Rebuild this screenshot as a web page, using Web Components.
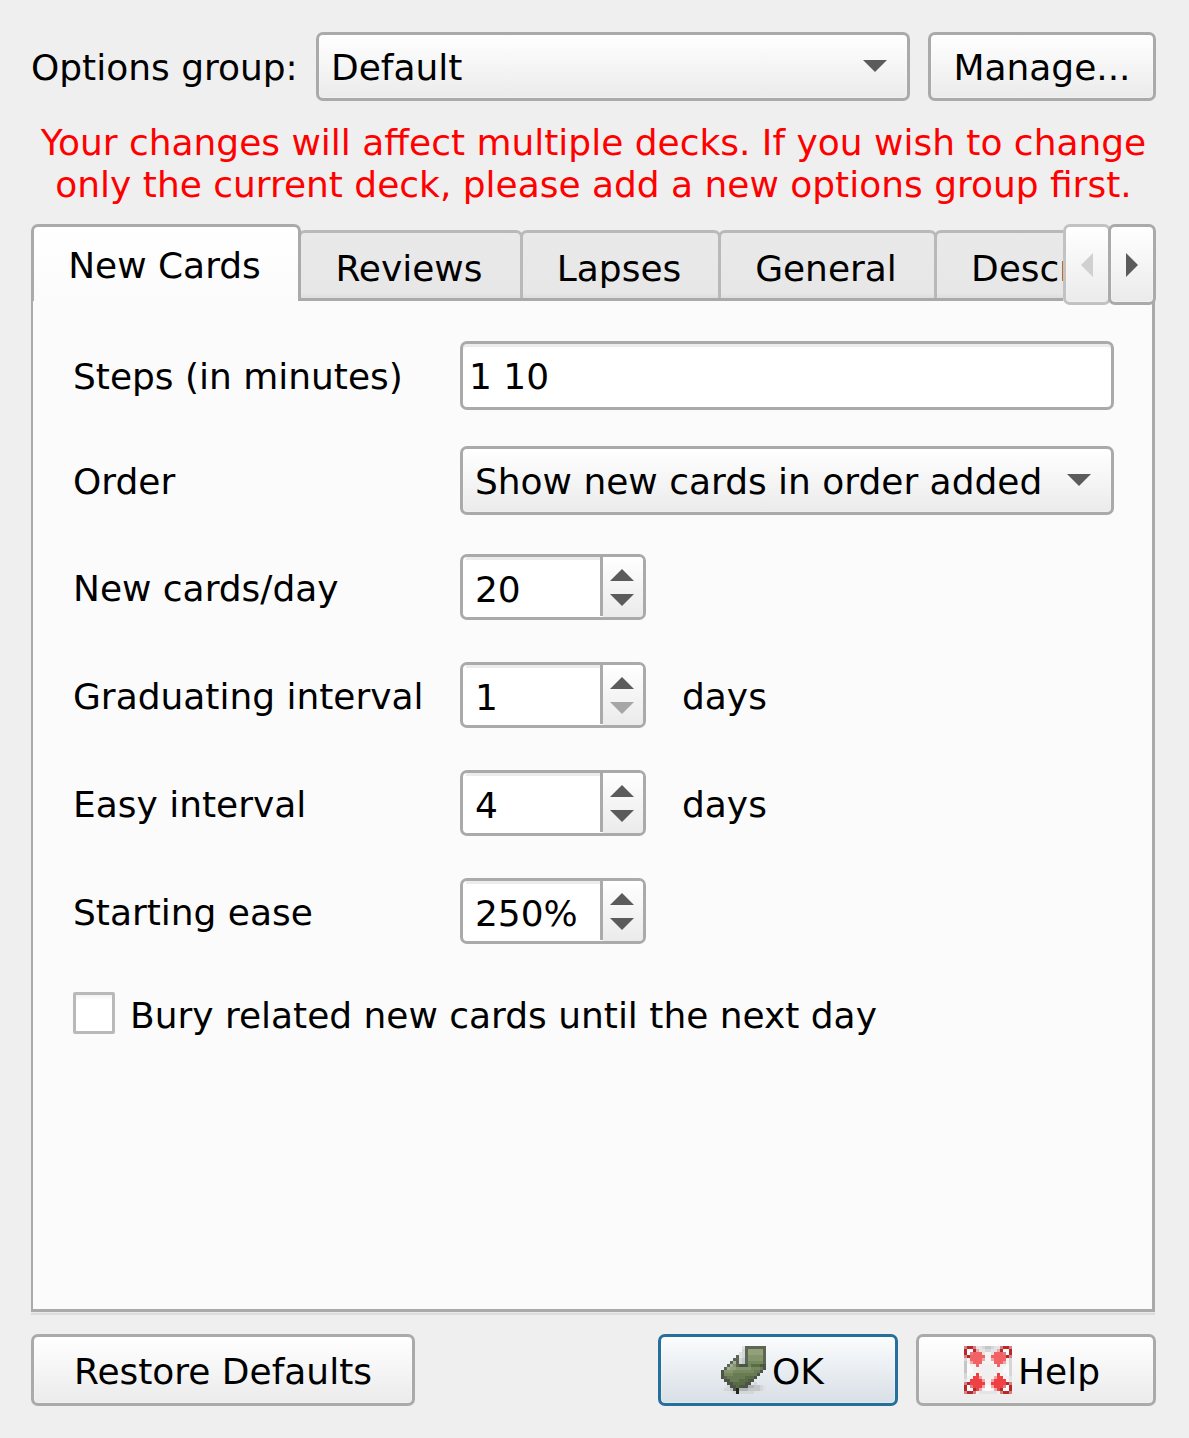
<!DOCTYPE html>
<html lang="en">
<head>
<meta charset="utf-8">
<title>Options</title>
<style>
html,body{margin:0;height:100%;background:#efefef}
body{font:35.96px/42px "DejaVu Sans",sans-serif;color:#000;overflow:hidden}
</style>
</head>
<body>
<options-dialog></options-dialog>
<script>
const define = (name, html, setup) => {
  const t = document.createElement('template');
  t.innerHTML = '<style>*{box-sizing:border-box}:host{box-sizing:border-box;white-space:nowrap}</style>' + html;
  customElements.define(name, class extends HTMLElement {
    constructor() {
      super();
      this.attachShadow({mode: 'open'}).append(t.content.cloneNode(true));
    }
    connectedCallback() { if (setup) setup(this, this.shadowRoot); }
  });
};

const frame = 'border:3px solid #aaa;border-radius:7px;';
const raised = frame + 'background:linear-gradient(#fff,#ebebeb);box-shadow:inset 0 0 0 1px rgba(255,255,255,.25);';

// Palette-indexed 16x16 icon, three device pixels per cell
const icons = {
  enter: {
    colors: {k:'#4b5446', d:'#5c6653', K:'#20271b', a:'#92a07c', b:'#84946c', c:'#76885e', e:'#687b52', f:'#5a6b47', g:'#4c5c3d', h:'#a4ad97', s:'#d3d7da', t:'#c4c8ca', u:'#b0b4b4', w:'#dfe2e5'},
    rows: [
      '.......wddddddd.',
      '.......sdaaaaad.',
      '......wsdaaaaad.',
      '.....dwsdbbbbbd.',
      '....ddstdbbbbbd.',
      '...dhdstdcccccd.',
      '..dhbdkkkcfffgk.',
      '.dhaabbbbbcccek.',
      'kbbbccccccceek..',
      'kccceeeeeeeek...',
      'kdeeeeeefffk....',
      '.kkeeefffgk.....',
      '..kkffffkk.s....',
      '.wskkfgkkuuttsw.',
      'wsstkKuuuttttsw.',
      '..wwsKssssswww..'
    ]
  },
  help: {
    colors: {D:'#b8282a', P:'#d08284', R:'#ef4144', r:'#f26265', q:'#f3a5a5', g:'#c6c6c6', h:'#d6d6d6', i:'#e4e4e4', w:'#fafafa', v:'#f3f3f3', x:'#f0f0f0'},
    rows: [
      'PDDPiihgghiiPDDP',
      'DwwDqiihhiiqDwwD',
      'DwPrrrivvirrrPwD',
      'PDrrrrrvvrrrrrDP',
      'hvrrrrqvvqrrrrvh',
      'gvqrrrvvvvrrrqvh',
      'gwvvrvxxxxvrvvwh',
      'gwwvvxxxxxxvvwwh',
      'gwwvvxxxxxxvvwwh',
      'hwvvRvxxxxvRvvwh',
      'hvvRRqxxxxqRRvvi',
      'ivRRRRqvvqRRRRvi',
      'PDRRRRRvvRRRRRDP',
      'DwPRRRqwwqRRRPwD',
      'DwwDRqvwwvqRDwwD',
      'PDDPviiiiiivPDDP'
    ]
  }
};
define('pixel-icon', `<style>:host{display:block;width:48px;height:48px;flex:none}svg{display:block}</style><svg width="48" height="48" viewBox="0 0 16 16" shape-rendering="crispEdges"></svg>`, (el, root) => {
  const icon = icons[el.getAttribute('name')];
  root.querySelector('svg').innerHTML = icon.rows.map((row, y) => [...row].map((c, x) =>
    icon.colors[c] ? `<rect x="${x}" y="${y}" width="1" height="1" fill="${icon.colors[c]}"/>` : '').join('')).join('');
});

define('arrow-glyph', `<style>
:host{display:block;flex:none;width:24px;height:12px;color:#5b5b5b}
:host([dim]){color:#a6a6a6}
:host([dir=left]),:host([dir=right]){width:12px;height:24px}
:host([dir=left]){color:#d0d0d0}
svg{display:block;width:100%;height:100%}
</style><svg preserveAspectRatio="none"><path fill="currentColor"/></svg>`, (el, root) => {
  const dir = el.getAttribute('dir') || 'down';
  root.querySelector('svg').setAttribute('viewBox', dir === 'left' || dir === 'right' ? '0 0 12 24' : '0 0 24 12');
  root.querySelector('path').setAttribute('d', {down:'M0 0H24L12 12Z', up:'M0 12H24L12 0Z', left:'M12 0V24L0 12Z', right:'M0 0V24L12 12Z'}[dir]);
});

define('push-button', `<style>
:host{display:flex;align-items:center;justify-content:center;${raised}}
:host([primary]){border-color:#256f9d;background:linear-gradient(#fbfcfd,#d8dfe6)}
span{padding-top:3px}
</style><slot name="icon"></slot><span><slot></slot></span>`);

define('combo-box', `<style>
:host{display:flex;align-items:center;justify-content:space-between;height:69px;padding:0 20px 0 12px;${raised}}
span{padding-top:2px}
arrow-glyph{margin-bottom:1px}
</style><span><slot></slot></span><arrow-glyph></arrow-glyph>`);

define('line-edit', `<style>
:host{display:flex;align-items:center;height:69px;padding:2px 6px 0;${frame}background:#fff;box-shadow:inset 0 3px #ececec}
</style><slot></slot>`);

define('spin-box', `<style>
:host{display:flex;width:186px;height:66px;${frame}background:#fff;overflow:hidden}
.value{flex:1;padding:12px 0 0 12px;background:linear-gradient(#ececec,#ececec) 3px 0/100% 3px no-repeat}
.steps{width:43px;height:59px;display:flex;flex-direction:column;align-items:center;gap:13px;padding:12px 2px 0 0;border-left:3px solid #aaa;background:linear-gradient(#fff,#ebebeb);box-shadow:3px 1px #ebebeb}
</style><div class="value"><slot></slot></div><div class="steps"><arrow-glyph dir="up"></arrow-glyph><arrow-glyph class="down"></arrow-glyph></div>`, (el, root) => {
  root.querySelector('.down').toggleAttribute('dim', el.hasAttribute('minimum'));
});

define('form-row', `<style>
:host{display:flex;align-items:center}
.label{width:387px;padding-top:2px}
:host(.spin) .label,:host(.first) .label{padding-top:4px}
.field{flex:1;display:flex;align-items:center;gap:36px}
::slotted(line-edit),::slotted(combo-box){flex:1}
::slotted(.unit){padding-top:4px}
</style><div class="label"><slot name="label"></slot></div><div class="field"><slot></slot></div>`);

define('check-box', `<style>
:host{display:flex;gap:15px;align-items:flex-start}
i{width:42px;height:42px;border:3px solid #b9b9b9;border-radius:2px;background:linear-gradient(#f1f1f1,#fff 5px)}
span{padding-top:3px}
</style><i></i><span><slot></slot></span>`);

define('tab-item', `<style>
:host{display:block;flex:none;height:68px;margin-top:6px;margin-right:-3px;padding:15px 34px 0 31px;text-align:center;border:3px solid #b9b9b9;border-bottom:0;border-radius:7px 7px 0 0;background:linear-gradient(#e9e9e9,#e7e7e7 92%,#dedede)}
:host(:not(:last-child)){padding-left:0;padding-right:3px}
:host(:last-child){padding-left:34px}
:host([active]){height:77px;margin-top:0;padding-top:18px;border-color:#aaa;background:linear-gradient(#fff,#fbfbfb);position:relative;z-index:1}
</style><slot></slot>`);

define('tab-bar', `<style>
:host{display:flex;height:77px;position:relative;z-index:1}
.tabs{display:flex;flex:1;min-width:0;overflow:hidden;background:linear-gradient(#aaa,#aaa) 0 100%/100% 3px no-repeat}
.scroll{display:flex;height:81px;width:93px;margin-right:-1px}
.scroll div{flex:none;width:48px;display:flex;align-items:center;justify-content:center;${raised}}
.scroll .off{border-color:#c2c2c2;margin-right:-3px}
</style><div class="tabs"><slot></slot></div><div class="scroll"><div class="off"><arrow-glyph dir="left"></arrow-glyph></div><div><arrow-glyph dir="right"></arrow-glyph></div></div>`);

define('tab-panel', `<style>
:host{display:flex;flex-direction:column;height:1011px;padding:40px 38px 0 40px;border:solid #aaa;border-width:0 3px 3px 2px;background:#fbfbfb;box-shadow:0 1px #e9e9e9,0 3px #dcdcdc}
</style><slot></slot>`);

define('options-dialog', `<style>
:host{display:flex;flex-direction:column;height:1438px;padding:32px 33px 0 31px;background:#efefef}
.top{display:flex;align-items:center}
.top .label{width:285px;padding-top:2px}
.top combo-box{flex:1}
.top push-button{width:228px;height:69px;margin-left:18px}
.warning{color:#f00;text-align:center;white-space:pre-line;margin:21px 0 18px}
tab-panel,tab-bar{margin-right:1px}
.order{margin-top:36px}
.first{margin-top:39px}
.spin{margin-top:42px}
check-box{margin-top:48px}
.footer{display:flex;margin-top:22px}
.footer push-button{height:72px;width:240px}
.footer .restore{width:384px;margin-right:auto}
.footer .help{margin-left:18px;padding-right:8px}
.footer .ok{padding-right:11px}
.ok pixel-icon{margin-right:3px}
.help pixel-icon{margin-right:6px}
</style>
<div class="top"><div class="label">Options group:</div><combo-box>Default</combo-box><push-button>Manage...</push-button></div>
<div class="warning">Your changes will affect multiple decks. If you wish to change
only the current deck, please add a new options group first.</div>
<tab-bar><tab-item active style="width:270px">New Cards</tab-item><tab-item style="width:225px">Reviews</tab-item><tab-item style="width:201px">Lapses</tab-item><tab-item style="width:219px">General</tab-item><tab-item>Description</tab-item></tab-bar>
<tab-panel>
<form-row><span slot="label">Steps (in minutes)</span><line-edit>1 10</line-edit></form-row>
<form-row class="order"><span slot="label">Order</span><combo-box>Show new cards in order added</combo-box></form-row>
<form-row class="first"><span slot="label">New cards/day</span><spin-box>20</spin-box></form-row>
<form-row class="spin"><span slot="label">Graduating interval</span><spin-box minimum>1</spin-box><span class="unit">days</span></form-row>
<form-row class="spin"><span slot="label">Easy interval</span><spin-box>4</spin-box><span class="unit">days</span></form-row>
<form-row class="spin"><span slot="label">Starting ease</span><spin-box>250%</spin-box></form-row>
<check-box>Bury related new cards until the next day</check-box>
</tab-panel>
<div class="footer"><push-button class="restore">Restore Defaults</push-button><push-button class="ok" primary><pixel-icon slot="icon" name="enter"></pixel-icon>OK</push-button><push-button class="help"><pixel-icon slot="icon" name="help"></pixel-icon>Help</push-button></div>`);
</script>
</body>
</html>
